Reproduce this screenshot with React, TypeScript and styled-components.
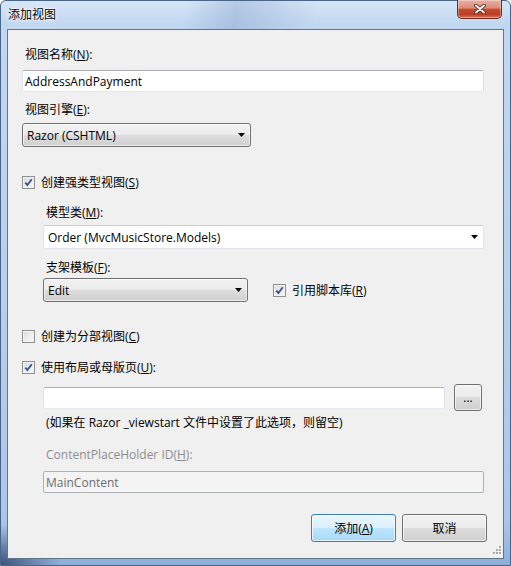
import React from 'react';
import styled, { createGlobalStyle } from 'styled-components';

const GlobalStyle = createGlobalStyle`
  html, body {
    margin: 0;
    padding: 0;
  }
  body {
    width: 511px;
    height: 566px;
    overflow: hidden;
    font-family: "Open Sans", "Noto Sans CJK SC", sans-serif;
    font-size: 12px;
    color: #000;
  }
`;

const Window = styled.div`
  width: 511px;
  height: 566px;
  box-sizing: border-box;
  display: flex;
  flex-direction: column;
  padding: 0 6px 6px 6px;
  border: 1px solid #4a6588;
  border-radius: 6px 6px 0 0;
  background:
    radial-gradient(ellipse 60px 40px at 0% 100%, rgba(30, 55, 90, 0.75), transparent),
    linear-gradient(100deg, transparent 36%, rgba(120, 150, 195, 0.35) 46%, transparent 62%) top / 100% 30px no-repeat,
    linear-gradient(to bottom, #d6e6f7 0%, #c2d8f1 4%, #b9d0ec 50%, #acc6e8 92%, #8eaedb 100%);
`;

const TitleBar = styled.div`
  height: 28px;
  display: flex;
  align-items: flex-start;
  justify-content: space-between;
`;

const Caption = styled.div`
  padding: 6px 0 0 1px;
  line-height: 16px;
  text-shadow: 0 0 6px #fff, 0 0 3px #fff, 0 0 1px #fff;
`;

const CloseButton = styled.div`
  width: 45px;
  height: 19px;
  margin: -1px 2px 0 0;
  box-sizing: border-box;
  display: flex;
  align-items: center;
  justify-content: center;
  border: 1px solid #6b2a1f;
  border-top: none;
  border-radius: 0 0 5px 5px;
  background: linear-gradient(to bottom, #eab0a2 0%, #dc8b78 45%, #c64a31 52%, #bd3e24 80%, #d8745a 100%);
  box-shadow: inset 0 0 0 1px rgba(255, 255, 255, 0.35);
`;

const Client = styled.div`
  flex: 1;
  position: relative;
  display: flex;
  flex-direction: column;
  padding: 17px 19px 0 14px;
  background: #f0f0f0;
  border: 1px solid #62748a;
`;

const Label = styled.div<{ $mt?: number; $disabled?: boolean }>`
  margin: ${(p) => p.$mt ?? 0}px 0 0 3px;
  line-height: 16px;
  height: 16px;
  color: ${(p) => (p.$disabled ? '#8d8d8d' : '#000')};
  white-space: nowrap;
`;

const TextBox = styled.div<{ $mt?: number; $disabled?: boolean; $grow?: boolean }>`
  margin-top: ${(p) => p.$mt ?? 0}px;
  flex: ${(p) => (p.$grow ? '1 1 auto' : 'none')};
  height: 22px;
  box-sizing: border-box;
  padding: 0 2px;
  display: flex;
  align-items: center;
  border: 1px solid;
  border-color: #abadb3 #dbdfe6 #e3e9ef #e2e3ea;
  border-radius: 2px;
  background: ${(p) => (p.$disabled ? '#f4f4f4' : '#fff')};
  color: ${(p) => (p.$disabled ? '#6d6d6d' : '#000')};
  ${(p) => p.$disabled && 'border-color: #adb2b5;'}
`;

const DropDown = styled.div<{ $mt?: number; $width?: number; $editable?: boolean }>`
  margin-top: ${(p) => p.$mt ?? 0}px;
  width: ${(p) => (p.$width ? `${p.$width}px` : 'auto')};
  flex: none;
  height: 24px;
  box-sizing: border-box;
  display: flex;
  align-items: center;
  justify-content: space-between;
  padding: 0 5px 0 4px;
  border: 1px solid ${(p) => (p.$editable ? '#e0e3e9' : '#707070')};
  border-top-color: ${(p) => (p.$editable ? '#c9ccd3' : '#707070')};
  border-radius: ${(p) => (p.$editable ? 2 : 3)}px;
  background: ${(p) =>
    p.$editable
      ? '#fff'
      : 'linear-gradient(to bottom, #f2f2f2 0%, #ebebeb 50%, #dddddd 50%, #cfcfcf 100%)'};
  box-shadow: ${(p) => (p.$editable ? 'none' : 'inset 0 0 0 1px rgba(255,255,255,0.6)')};
`;

const CheckRow = styled.div<{ $mt?: number }>`
  margin-top: ${(p) => p.$mt ?? 0}px;
  height: 16px;
  display: flex;
  align-items: center;
  gap: 6px;
  white-space: nowrap;
`;

const Box = styled.span`
  width: 13px;
  height: 13px;
  box-sizing: border-box;
  display: inline-flex;
  align-items: center;
  justify-content: center;
  border: 1px solid #8e8f8f;
  background: linear-gradient(135deg, #d5d8dd 0%, #eceef0 55%, #f8f8f8 100%);
  box-shadow: inset 0 0 0 1px #f4f4f4;
`;

const Indent = styled.div`
  display: flex;
  flex-direction: column;
  padding-left: 21px;
`;

const InlineRow = styled.div<{ $mt?: number; $gap?: number }>`
  margin-top: ${(p) => p.$mt ?? 0}px;
  display: flex;
  align-items: center;
  gap: ${(p) => p.$gap ?? 0}px;
`;

const PushButton = styled.div<{ $primary?: boolean; $width: number; $height: number }>`
  width: ${(p) => p.$width}px;
  height: ${(p) => p.$height}px;
  flex: none;
  box-sizing: border-box;
  display: flex;
  align-items: center;
  justify-content: center;
  border: 1px solid ${(p) => (p.$primary ? '#3c7fb1' : '#707070')};
  border-radius: 3px;
  background: ${(p) =>
    p.$primary
      ? 'linear-gradient(to bottom, #eaf6fd 0%, #d9f0fc 50%, #bee6fd 50%, #a7d9f5 100%)'
      : 'linear-gradient(to bottom, #f2f2f2 0%, #ebebeb 50%, #dddddd 50%, #cfcfcf 100%)'};
  box-shadow: inset 0 0 0 1px ${(p) => (p.$primary ? 'rgba(255,255,255,0.7)' : 'rgba(255,255,255,0.6)')};
  white-space: nowrap;
`;

const BrowseButton = styled(PushButton)`
  margin-right: 2px;
`;

const Hint = styled.div<{ $mt?: number }>`
  margin: ${(p) => p.$mt ?? 0}px 0 0 3px;
  line-height: 16px;
  white-space: nowrap;
`;

const ButtonRow = styled.div`
  margin: 21px -3px 0 0;
  display: flex;
  justify-content: flex-end;
  gap: 6px;
`;

const Grip = styled.svg`
  position: absolute;
  right: 1px;
  bottom: 2px;
`;

const Arrow = () => (
  <svg width="7" height="4" viewBox="0 0 7 4">
    <path d="M0 0H7L3.5 4Z" fill="#000" />
  </svg>
);

const Check = ({ checked }: { checked?: boolean }) => (
  <Box>
    {checked && (
      <svg width="9" height="9" viewBox="0 0 9 9">
        <path d="M1.3 4.6L3.4 7L7.8 1.2" fill="none" stroke="#3e5190" strokeWidth="1.9" />
      </svg>
    )}
  </Box>
);

export default function App() {
  return (
    <>
      <GlobalStyle />
      <Window>
        <TitleBar>
          <Caption>添加视图</Caption>
          <CloseButton>
            <svg width="12" height="10" viewBox="0 0 12 10">
              <path d="M2 1.5L10 8.5M10 1.5L2 8.5" stroke="#4a1a12" strokeWidth="3.6" strokeLinecap="round" />
              <path d="M2 1.5L10 8.5M10 1.5L2 8.5" stroke="#fff" strokeWidth="2" strokeLinecap="round" />
            </svg>
          </CloseButton>
        </TitleBar>
        <Client>
          <Label>
            视图名称(<u>N</u>):
          </Label>
          <TextBox $mt={7}>AddressAndPayment</TextBox>
          <Label $mt={10}>
            视图引擎(<u>E</u>):
          </Label>
          <DropDown $mt={5} $width={229}>
            Razor (CSHTML)
            <Arrow />
          </DropDown>

          <CheckRow $mt={27}>
            <Check checked />
            <span>
              创建强类型视图(<u>S</u>)
            </span>
          </CheckRow>
          <Indent>
            <Label $mt={15}>
              模型类(<u>M</u>):
            </Label>
            <DropDown $mt={4} $editable>
              Order (MvcMusicStore.Models)
              <Arrow />
            </DropDown>
            <Label $mt={11}>
              支架模板(<u>F</u>):
            </Label>
            <InlineRow $mt={2} $gap={25}>
              <DropDown $width={205}>
                Edit
                <Arrow />
              </DropDown>
              <CheckRow>
                <Check checked />
                <span>
                  引用脚本库(<u>R</u>)
                </span>
              </CheckRow>
            </InlineRow>
          </Indent>

          <CheckRow $mt={26}>
            <Check />
            <span>
              创建为分部视图(<u>C</u>)
            </span>
          </CheckRow>
          <CheckRow $mt={15}>
            <Check checked />
            <span>
              使用布局或母版页(<u>U</u>):
            </span>
          </CheckRow>
          <Indent>
            <InlineRow $mt={9} $gap={9}>
              <TextBox $grow />
              <BrowseButton $width={28} $height={27}>
                ...
              </BrowseButton>
            </InlineRow>
            <Hint $mt={4}>(如果在 Razor _viewstart 文件中设置了此选项，则留空)</Hint>
            <Label $mt={16} $disabled>
              ContentPlaceHolder ID(<u>H</u>):
            </Label>
            <TextBox $mt={8} $disabled>
              MainContent
            </TextBox>
          </Indent>

          <ButtonRow>
            <PushButton $primary $width={85} $height={28}>
              添加(<u>A</u>)
            </PushButton>
            <PushButton $width={85} $height={28}>
              取消
            </PushButton>
          </ButtonRow>

          <Grip width="10" height="10" viewBox="0 0 10 10">
            {[
              [7, 0],
              [4, 3],
              [7, 3],
              [1, 6],
              [4, 6],
              [7, 6],
            ].map(([x, y]) => (
              <g key={`${x}-${y}`}>
                <rect x={x + 1} y={y + 1} width="2" height="2" fill="#fff" />
                <rect x={x} y={y} width="2" height="2" fill="#a9a9a9" />
              </g>
            ))}
          </Grip>
        </Client>
      </Window>
    </>
  );
}
